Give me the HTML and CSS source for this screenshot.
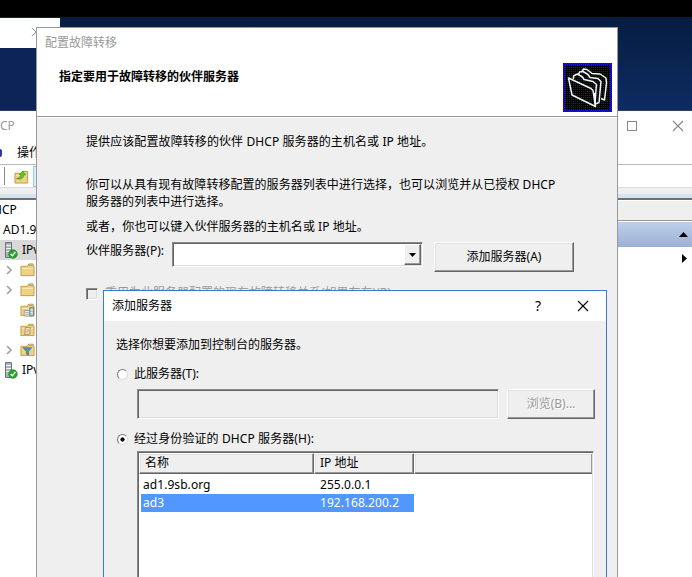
FILE: index.html
```html
<!DOCTYPE html>
<html lang="zh-CN">
<head>
<meta charset="utf-8">
<title>配置故障转移</title>
<link rel="stylesheet" href="styles.css">
</head>
<body>
<svg width="0" height="0" class="defs">
  <defs>
    <symbol id="folder" viewBox="0 0 16 14">
      <path d="M1 3h7l1.500-2.500h4.500v2.500h1v10h-14z" fill="#efd184" stroke="#c29b49"/>
      <path d="M9.500 2h4" stroke="#5ba8df"/>
      <path d="M2 5.500h12" stroke="#fbe7b0"/>
    </symbol>
    <symbol id="server" viewBox="0 0 14 17">
      <path d="M1.500.5h6v15h-6z" fill="#a8b2b8" stroke="#68757d"/>
      <path d="M2 3.500h5M2 6.500h5M2 9.500h5" stroke="#f2f6f7"/>
      <circle cx="9" cy="12" r="4.300" fill="#27a32c" stroke="#168020" stroke-width=".6"/>
      <path d="M6.700 12l1.700 1.800 3-3.800" fill="none" stroke="#fff" stroke-width="1.300"/>
    </symbol>
    <symbol id="chevron" viewBox="0 0 6 10">
      <path d="M1 1l4 4-4 4" fill="none" stroke="#a2a2a2" stroke-width="1.600"/>
    </symbol>
    <symbol id="cross" viewBox="0 0 12 12">
      <path d="M1 1l10 10M11 1l-10 10" fill="none" stroke="currentColor" stroke-width="1.100"/>
    </symbol>
  </defs>
</svg>
<div class="desktop">
  <div class="back-window"><svg class="back-close"><use href="#cross"/></svg></div>

  <section class="console">
    <div class="console-title">
      <span class="grow">CP</span>
      <i class="maximize"></i>
      <svg class="close"><use href="#cross"/></svg>
    </div>
    <div class="menu"><i class="menu-icon"></i><span>操作</span></div>
    <div class="toolbar">
      <i class="separator"></i>
      <svg class="up-icon" viewBox="0 0 16 15">
        <path d="M1 4h7l1.500-2h5v12.500h-13.500z" fill="#efd184" stroke="#bd9849"/>
        <path d="M2 6.500h12" stroke="#fbe7b0"/>
        <path d="M2.500 9.500c3 0 4.500-2 4.700-4h-1.700l4-4 3 4.500h-2c-.5 4-4 5.500-8 3.500z" fill="#54c926" stroke="#36941b" stroke-width=".6"/>
      </svg>
      <i class="tool-active"></i>
    </div>
    <div class="strip"></div>
    <div class="panes">
      <ul class="tree">
        <li class="root">HCP</li>
        <li class="host">AD1.9</li>
        <li class="proto selected"><svg class="server"><use href="#server"/></svg>IPv</li>
        <li class="node"><svg class="chevron"><use href="#chevron"/></svg><svg class="folder"><use href="#folder"/></svg></li>
        <li class="node"><svg class="chevron"><use href="#chevron"/></svg><svg class="folder"><use href="#folder"/></svg></li>
        <li class="node"><svg class="folder alone" viewBox="0 0 16 14"><use href="#folder"/><path d="M4.500 7.500h6v6h-6z" fill="#f5f5f5" stroke="#999"/><path d="M6 9.500h1M8 9.500h1M6 11.500h1M8 11.500h1" stroke="#556"/><path d="M10.500 4.500h4v9h-4z" fill="#b9c2c8" stroke="#707b82"/><path d="M11 7h3M11 10h3" stroke="#f5f5f5"/></svg></li>
        <li class="node"><svg class="folder alone" viewBox="0 0 16 14"><use href="#folder"/><path d="M5.500 4.500h6l-1 2v5h-6l1-2z" fill="#f9f2dd" stroke="#a68953"/><path d="M7 7h2.500M6.500 9h2.500" stroke="#a68953"/></svg></li>
        <li class="node"><svg class="chevron"><use href="#chevron"/></svg><svg class="folder" viewBox="0 0 16 14"><use href="#folder"/><path d="M3 4.500h9.500l-3.500 4v4l-2-1v-3z" fill="#668cad" stroke="#40698c" stroke-width=".7"/></svg></li>
        <li class="proto"><svg class="server"><use href="#server"/></svg>IPv</li>
      </ul>
      <div class="actions">
        <div class="actions-head"></div>
        <div class="actions-group"><svg viewBox="0 0 9 5"><path d="M0 5l4.500-5 4.500 5z"/></svg></div>
        <div class="actions-more"><svg viewBox="0 0 5 9"><path d="M0 0l5 4.500-5 4.500z"/></svg></div>
      </div>
    </div>
  </section>

  <section class="wizard">
    <header class="wizard-head">
      <div class="wizard-titles">
        <div class="wizard-caption">配置故障转移</div>
        <h1>指定要用于故障转移的伙伴服务器</h1>
      </div>
      <svg class="wizard-icon" viewBox="0 0 49 49">
        <defs><pattern id="dots" width="4" height="4" patternUnits="userSpaceOnUse"><path d="M0 0h1v1h-1zM2 2h1v1h-1zM2 0h1v1h-1zM0 2h1v1h-1z" fill="#1818a8"/></pattern>
        <pattern id="edge" width="2" height="2" patternUnits="userSpaceOnUse"><path d="M0 0h1v1h-1zM1 1h1v1h-1z" fill="#0000a0"/></pattern></defs>
        <path d="M0 0h49v49h-49z" fill="#2410ff"/><path d="M0 0h49v49h-49z" fill="url(#edge)"/>
        <path d="M2 2h45v45h-45z" fill="#000"/><path d="M2 2h45v45h-45z" fill="url(#dots)"/>
        <g fill="none" stroke="#f4f4f4" stroke-width="1.500" stroke-linejoin="round">
          <path d="M5.500 15l22.500 10.500 2 2 2.500 16-23.500-11.500z"/>
          <path d="M10.500 16v-3l4-2 5 3 1.500 2.500 9 2 3.500 3-.5 5-1 15"/>
          <path d="M15.500 11.500l1-2.500 3.500-.5 5 3 2 3 8 1 3 3-.5 5-1.500 16-3.500 1.500"/>
          <path d="M19 8.500l1.500-2.500 3.500.500 5 4 8 .5 6 4 .5 5-2 17-3.500-1.500"/>
        </g>
        <path d="M30 28l3 4v11z" fill="#fff"/>
      </svg>
    </header>
    <div class="wizard-body">
      <p class="intro">提供应该配置故障转移的伙伴 DHCP 服务器的主机名或 IP 地址。</p>
      <p class="help">你可以从具有现有故障转移配置的服务器列表中进行选择，也可以浏览并从已授权 DHCP<br>服务器的列表中进行选择。</p>
      <p class="or">或者，你也可以键入伙伴服务器的主机名或 IP 地址。</p>
      <div class="partner">
        <label>伙伴服务器(P):</label>
        <div class="combo"><span class="arrow"><svg viewBox="0 0 7 4"><path d="M0 0h7l-3.500 4z"/></svg></span></div>
        <div class="button add">添加服务器(A)</div>
      </div>
      <div class="reuse"><i class="checkbox"></i><span>重用为此服务器配置的现有故障转移关系(如果存在)(R)</span></div>
    </div>
  </section>

  <section class="dialog">
    <header class="dialog-head"><span class="grow">添加服务器</span><span class="question">?</span><svg class="close"><use href="#cross"/></svg></header>
    <div class="dialog-body">
      <p class="choose">选择你想要添加到控制台的服务器。</p>
      <div class="option"><i class="radio"></i><span>此服务器(T):</span></div>
      <div class="browse-row"><div class="field"></div><div class="button browse">浏览(B)...</div></div>
      <div class="option second"><i class="radio checked"></i><span>经过身份验证的 DHCP 服务器(H):</span></div>
      <div class="list">
        <div class="list-head"><span>名称</span><span>IP 地址</span><span></span></div>
        <div class="list-row"><span>ad1.9sb.org</span><span>255.0.0.1</span></div>
        <div class="list-row picked"><span>ad3</span><span>192.168.200.2</span></div>
      </div>
    </div>
  </section>
</div>
</body>
</html>
```
FILE: styles.css
```css
* { box-sizing: border-box; }
body {
  margin: 0;
  font: 12px/18px "Noto Sans", "Noto Sans CJK SC", sans-serif;
  color: #000;
  overflow: hidden;
}
.defs { position: absolute; }
svg { display: block; flex: none; }
i { display: block; flex: none; }
p, h1, ul { margin: 0; padding: 0; }
p, span, label, li, h1 { white-space: nowrap; }
.grow { flex: 1; }
.desktop {
  position: relative;
  width: 692px;
  height: 577px;
  overflow: hidden;
  border-top: 17px solid #000;
  background: linear-gradient(90deg, #0c2457 0 5%, transparent 9%), linear-gradient(#071d40, #0d2c62 93px);
}
.back-window {
  position: absolute;
  left: 0; top: 1px;
  width: 60px; height: 30px;
  padding: 9px 0 0 31px;
  background: #fff;
}
.back-close { width: 10px; height: 10px; color: #888; }

.console {
  position: absolute;
  left: 0; top: 93px;
  width: 692px; height: 467px;
  background: #fff;
  border-top: 1px solid #353b60;
}
.console-title { display: flex; align-items: center; height: 29px; padding-right: 8px; color: #999; }
.maximize { width: 10px; height: 10px; border: 1px solid #888; margin-right: 35px; }
.console-title .close { width: 12px; height: 12px; color: #888; }
.menu { display: flex; align-items: center; gap: 15px; height: 25px; padding-top: 2px; border-bottom: 1px solid #b9b9b9; }
.menu-icon { width: 2px; height: 8px; border-radius: 0 3px 3px 0; background: #3433a8; }
.toolbar { display: flex; align-items: center; height: 23px; padding-left: 4px; border-bottom: 1px solid #ddd; }
.separator { width: 1px; height: 18px; background: #888; }
.up-icon { width: 15px; height: 15px; margin-left: 9px; }
.tool-active { width: 12px; height: 21px; margin-left: 4px; border: 1px solid #99cbee; background: #dceefa; }
.strip { height: 12px; border-top: 6px solid #efefef; border-bottom: 2px solid #6e6e6e; background: #d5e2ef; }
.panes { display: flex; height: 377px; }
.tree { width: 37px; overflow: hidden; list-style: none; }
.tree li { display: flex; align-items: center; height: 20px; }
.root { margin-left: -7px; }
.host { padding-left: 3px; }
.proto { padding-left: 4px; gap: 4px; }
.selected { background: #d9d9d9; }
.server { width: 14px; height: 17px; }
.node { padding-left: 6px; gap: 8px; }
.chevron { width: 6px; height: 10px; }
.folder { width: 15px; height: 14px; }
.alone { margin-left: 14px; }
.actions { width: 75px; margin-left: auto; }
.actions-head { height: 21px; border-top: 1px solid #fff; border-bottom: 1px solid #979797; background: #efefef; }
.actions-group { display: flex; align-items: center; justify-content: flex-end; height: 26px; padding-right: 4px; border-top: 1px solid #fff; background: linear-gradient(#bcd0eb, #9db0d3); }
.actions-group svg { width: 9px; height: 5px; }
.actions-more { display: flex; align-items: center; justify-content: flex-end; height: 23px; padding-right: 5px; }
.actions-more svg { width: 5px; height: 9px; }

.wizard {
  position: absolute;
  left: 36px; top: 10px;
  width: 582px; height: 560px;
  border: 1px solid #999;
  border-bottom: 0;
  background: #efefef;
}
.wizard-head { display: flex; justify-content: space-between; height: 89px; background: #fff; border-bottom: 1px solid #999; }
.wizard-titles { padding: 6px 0 0 8px; }
.wizard-caption { color: #999; }
.wizard-head h1 { margin: 15px 0 0 14px; font-size: 12px; line-height: 20px; font-weight: 700; }
.wizard-icon { width: 49px; height: 49px; margin: 35px 5px 0 0; }
.wizard-body { padding: 15px 0 0 49px; border-top: 1px solid #fff; }
.intro { letter-spacing: .09px; }
.help { margin-top: 25px; line-height: 17px; letter-spacing: .04px; }
.or { margin-top: 8px; line-height: 17px; letter-spacing: .05px; }
.partner { display: flex; margin-top: 7px; height: 30px; }
.partner label { width: 86px; letter-spacing: .05px; }
.combo { display: flex; justify-content: flex-end; width: 251px; height: 25px; padding: 1px; border: 1px solid; border-color: #888 #fff #fff #888; background: #fff; box-shadow: inset 1px 1px #666, inset -1px -1px #ddd; }
.arrow { display: flex; align-items: center; justify-content: center; width: 17px; background: #efefef; border: 1px solid; border-color: #fff #666 #666 #fff; box-shadow: inset -1px -1px #999; }
.arrow svg { width: 7px; height: 4px; }
.button { display: flex; align-items: center; justify-content: center; border: 1px solid; border-color: #fff #666 #666 #fff; background: #efefef; box-shadow: inset -1px -1px #999, inset 1px 1px #e1e1e1; }
.add { width: 140px; height: 30px; margin-left: 11px; }
.reuse { display: flex; gap: 7px; margin-top: 16px; color: #999; }
.checkbox { width: 12px; height: 12px; border: 1px solid; border-color: #888 #fff #fff #888; box-shadow: inset 1px 1px #666, inset -1px -1px #ddd; }
.reuse span { margin-top: -4px; }

.dialog {
  position: absolute;
  left: 103px; top: 273px;
  width: 504px; height: 300px;
  border: 1px solid #377bcf;
  background: #efefef;
}
.dialog-head { display: flex; align-items: center; height: 30px; padding: 0 17px 0 8px; background: #fff; }
.question { width: 42px; font-size: 14px; }
.dialog-head .close { width: 12px; height: 12px; }
.dialog-body { padding: 15px 0 0 12px; }
.option { display: flex; align-items: center; gap: 6px; height: 18px; margin-top: 11px; padding-left: 1px; }
.radio { width: 11px; height: 11px; border: 1px solid; border-color: #777 #ddd #ddd #777; border-radius: 50%; background: #fff; }
.checked { background: radial-gradient(circle, #000 0 1.8px, #fff 2.4px); }
.browse-row { display: flex; margin: 6px 0 0 21px; gap: 8px; }
.field { width: 362px; height: 30px; border: 1px solid; border-color: #888 #fff #fff #888; box-shadow: inset 1px 1px #666, inset -1px -1px #ddd; }
.browse { width: 88px; height: 30px; color: #999; text-shadow: 1px 1px #fff; }
.second span { letter-spacing: .1px; }
.list { width: 457px; height: 150px; margin: 3px 0 0 21px; border: 1px solid; border-color: #888 #fff #fff #888; padding: 1px; background: #fff; box-shadow: inset 1px 1px #666, inset -1px 0 #ddd; }
.list-head { display: grid; grid-template-columns: 175px 100px 1fr; height: 21px; margin-bottom: 2px; }
.list-head span { padding-left: 5px; border: 1px solid; border-color: #fff #666 #666 #fff; background: #efefef; box-shadow: inset -1px -1px #999, inset 1px 1px #e1e1e1; }
.list-head span:last-child { border-right: 0; }
.list-row { display: grid; grid-template-columns: 177px 1fr; width: 273px; height: 18px; margin-left: 2px; padding-left: 2px; letter-spacing: .06px; }
.picked { background: #5297ff; color: #fff; }
```
